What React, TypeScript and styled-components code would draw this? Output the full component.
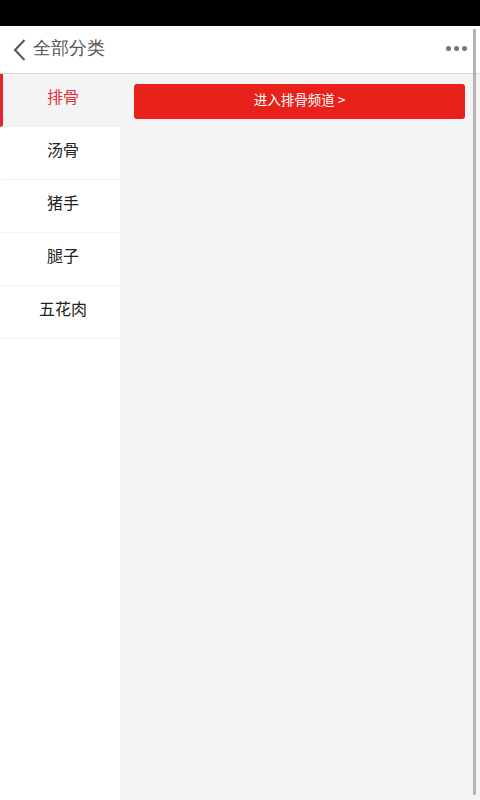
import { useState } from 'react';
import styled, { createGlobalStyle } from 'styled-components';

const GlobalStyle = createGlobalStyle`
  html, body {
    margin: 0;
    padding: 0;
    background: #fff;
    font-family: "Noto Sans CJK SC", "Noto Sans", sans-serif;
  }
`;

const Screen = styled.div`
  position: relative;
  width: 480px;
  height: 800px;
  display: flex;
  flex-direction: column;
  overflow: hidden;
`;

const StatusBar = styled.div`
  height: 26px;
  background: #000;
  flex-shrink: 0;
`;

const Header = styled.header`
  height: 47px;
  display: flex;
  align-items: center;
  padding: 0 14px 0 12px;
  background: #fff;
  border-bottom: 1px solid #d6d6d6;
  flex-shrink: 0;
`;

const BackButton = styled.button`
  display: flex;
  align-items: center;
  gap: 6px;
  padding: 0;
  border: none;
  background: none;
  cursor: pointer;
`;

const Title = styled.span`
  font-size: 17.5px;
  color: #555;
  line-height: 1;
  padding-bottom: 2px;
`;

const MoreDots = styled.div`
  margin-left: auto;
  display: flex;
  gap: 3px;
  margin-right: -1px;
  padding-bottom: 2px;
`;

const Dot = styled.span`
  width: 5px;
  height: 5px;
  border-radius: 50%;
  background: #777;
`;

const Body = styled.div`
  flex: 1;
  display: flex;
  min-height: 0;
`;

const Sidebar = styled.nav`
  width: 120px;
  background: #fff;
  flex-shrink: 0;
`;

const CategoryItem = styled.div<{ $active?: boolean }>`
  height: 52px;
  box-sizing: border-box;
  display: flex;
  align-items: center;
  justify-content: center;
  font-size: 16px;
  color: ${(p) => (p.$active ? '#e0303a' : '#222')};
  background: ${(p) => (p.$active ? '#f4f4f4' : '#fff')};
  border-left: 3px solid ${(p) => (p.$active ? '#e3262d' : 'transparent')};
  border-bottom: 1px solid #f2f2f2;
  padding: 0 0 8px 3px;
  height: 53px;
  cursor: pointer;
`;

const Content = styled.main`
  flex: 1;
  background: #f4f4f4;
  padding: 10px 15px 0 14px;
`;

const ChannelButton = styled.button`
  width: 100%;
  height: 35px;
  border: none;
  border-radius: 3px;
  background: #e8221b;
  color: #fff;
  font-family: inherit;
  font-size: 13.5px;
  padding: 0 0 5px;
  cursor: pointer;
`;

const ScrollBar = styled.div`
  position: absolute;
  top: 29px;
  right: 4px;
  width: 3px;
  height: 766px;
  background: #b4b4b4;
  border-radius: 1px;
`;

const categories = ['排骨', '汤骨', '猪手', '腿子', '五花肉'];

function App() {
  const [active, setActive] = useState(0);

  return (
    <>
      <GlobalStyle />
      <Screen>
        <StatusBar />
        <Header>
          <BackButton>
            <svg width="15" height="24" viewBox="0 0 15 24">
              <path d="M12.5 2 L3 12 L12.5 22" fill="none" stroke="#555" strokeWidth="2" />
            </svg>
            <Title>全部分类</Title>
          </BackButton>
          <MoreDots>
            <Dot />
            <Dot />
            <Dot />
          </MoreDots>
        </Header>
        <Body>
          <Sidebar>
            {categories.map((name, i) => (
              <CategoryItem key={name} $active={i === active} onClick={() => setActive(i)}>
                {name}
              </CategoryItem>
            ))}
          </Sidebar>
          <Content>
            <ChannelButton>进入{categories[active]}频道 &gt;</ChannelButton>
          </Content>
        </Body>
        <ScrollBar />
      </Screen>
    </>
  );
}

export default App;
